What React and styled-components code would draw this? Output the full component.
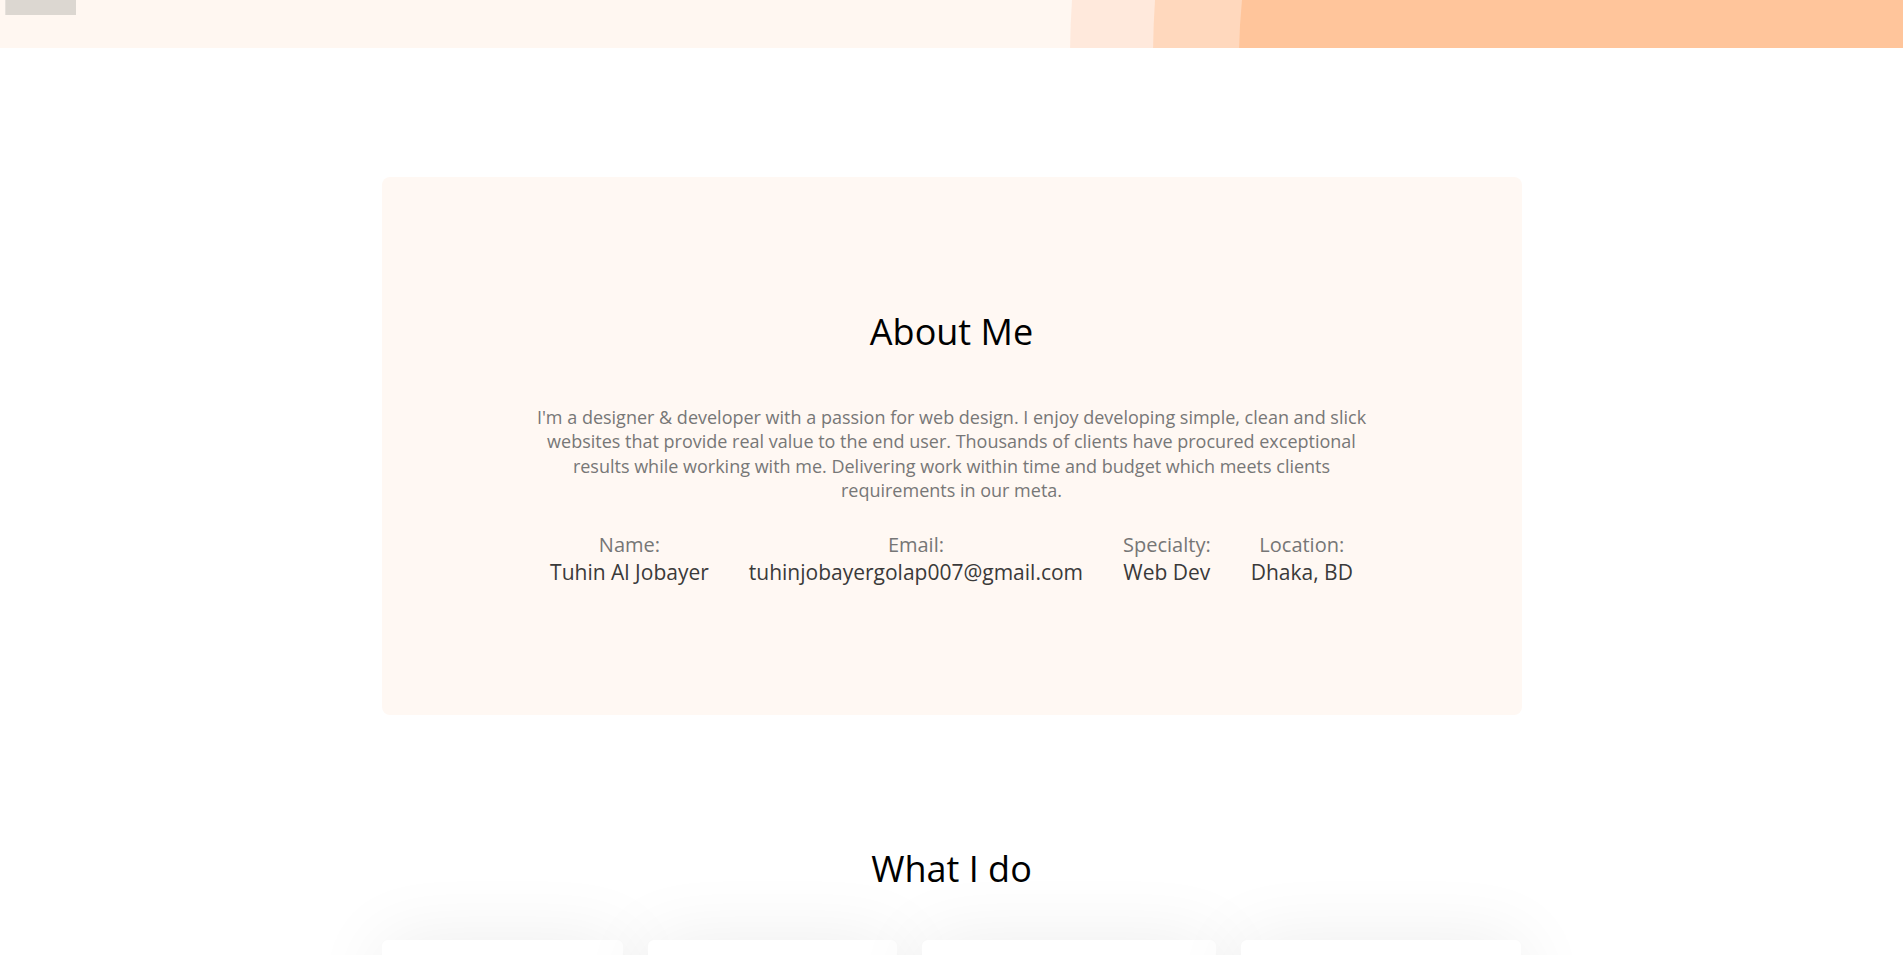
import React from "react";
import styled, { createGlobalStyle } from "styled-components";

const GlobalStyle = createGlobalStyle`
  html, body {
    margin: 0;
    padding: 0;
    background: #ffffff;
    font-family: "Open Sans", "Noto Sans", sans-serif;
    color: #212529;
  }
  * { box-sizing: border-box; }
`;

const HeroBand = styled.header`
  position: relative;
  height: 48px;
  background: #fff7f1;
  overflow: hidden;
`;

const LogoBox = styled.div`
  position: relative;
  z-index: 2;
  margin-left: 5px;
  width: 71px;
  height: 15px;
  background: #dcd7d1;
  border-left: 1px solid #e6e1dc;
`;

const Ring = styled.div`
  position: absolute;
  border-radius: 50%;
  left: ${(p) => p.$left}px;
  top: ${(p) => 60 - p.$r}px;
  width: ${(p) => p.$r * 2}px;
  height: ${(p) => p.$r * 2}px;
  background: ${(p) => p.$color};
`;

const Container = styled.main`
  width: 1140px;
  margin: 0 auto;
`;

const AboutCard = styled.section`
  margin-top: 129px;
  background: #fff8f3;
  border-radius: 8px;
  padding: 133px 0 129px;
  display: flex;
  flex-direction: column;
  align-items: center;
`;

const SectionTitle = styled.h2`
  margin: 0;
  font-size: 36px;
  line-height: 1.2;
  font-weight: 400;
  color: #000;
  text-align: center;
`;

const Lead = styled.p`
  margin: 52px 0 0;
  max-width: 850px;
  font-size: 18px;
  line-height: 24.3px;
  color: #777777;
  text-align: center;
`;

const InfoRow = styled.div`
  margin-top: 30px;
  display: flex;
  justify-content: center;
  gap: 40px;
`;

const InfoItem = styled.div`
  display: flex;
  flex-direction: column;
  align-items: center;
  text-align: center;
`;

const InfoLabel = styled.span`
  font-size: 20px;
  line-height: 26.6px;
  color: #767676;
`;

const InfoValue = styled.span`
  font-size: 21px;
  line-height: 26.6px;
  font-weight: 500;
  color: #3a3a3a;
`;

const ServicesSection = styled.section`
  margin-top: 132px;
  display: flex;
  flex-direction: column;
  align-items: center;
`;

const ServiceGrid = styled.div`
  margin-top: 50px;
  width: 100%;
  display: grid;
  grid-template-columns: 241px 249px 294px 280px;
  gap: 25px;
`;

const ServiceCard = styled.div`
  height: 320px;
  background: #ffffff;
  border-radius: 6px;
  box-shadow: 0 0 75px rgba(0, 0, 0, 0.075);
`;

const info = [
  { label: "Name:", value: "Tuhin Al Jobayer" },
  { label: "Email:", value: "tuhinjobayergolap007@gmail.com" },
  { label: "Specialty:", value: "Web Dev" },
  { label: "Location:", value: "Dhaka, BD" },
];

export default function App() {
  return (
    <>
      <GlobalStyle />
      <HeroBand>
        <Ring $left={1070} $r={900} $color="#ffe9dc" />
        <Ring $left={1153} $r={900} $color="#ffd8bd" />
        <Ring $left={1239} $r={600} $color="#ffc59b" />
        <LogoBox />
      </HeroBand>
      <Container>
        <AboutCard>
          <SectionTitle>About Me</SectionTitle>
          <Lead>
            I'm a designer &amp; developer with a passion for web design. I enjoy
            developing simple, clean and slick websites that provide real value to
            the end user. Thousands of clients have procured exceptional results
            while working with me. Delivering work within time and budget which
            meets clients requirements in our meta.
          </Lead>
          <InfoRow>
            {info.map((i) => (
              <InfoItem key={i.label}>
                <InfoLabel>{i.label}</InfoLabel>
                <InfoValue>{i.value}</InfoValue>
              </InfoItem>
            ))}
          </InfoRow>
        </AboutCard>
        <ServicesSection>
          <SectionTitle>What I do</SectionTitle>
          <ServiceGrid>
            <ServiceCard />
            <ServiceCard />
            <ServiceCard />
            <ServiceCard />
          </ServiceGrid>
        </ServicesSection>
      </Container>
    </>
  );
}
